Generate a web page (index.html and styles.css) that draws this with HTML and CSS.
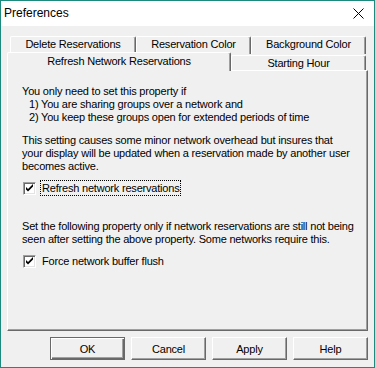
FILE: index.html
```html
<!DOCTYPE html>
<html lang="en">
<head>
  <meta charset="UTF-8" />
  <title>Preferences</title>
  <link rel="stylesheet" href="styles.css">
</head>
<body>
  <div class="window">
    <div class="titlebar">
      <span class="title">Preferences</span>
      <svg class="close" width="11" height="11" viewBox="0 0 11 11">
        <path d="M0.5 0.5 L10.5 10.5 M10.5 0.5 L0.5 10.5" stroke="#000" stroke-width="1" fill="none" />
      </svg>
    </div>
    <div class="dialog">
      <div class="tab-row back">
        <div class="tab w-delete">Delete Reservations</div>
        <div class="tab w-color">Reservation Color</div>
        <div class="tab w-color">Background Color</div>
      </div>
      <div class="tab-row front">
        <div class="tab active">Refresh Network Reservations</div>
        <div class="tab w-hour">Starting Hour</div>
      </div>
      <div class="panel">
        <div class="para">
          You only need to set this property if<br>
          <span class="indent">1) You are sharing groups over a network and</span><br>
          <span class="indent">2) You keep these groups open for extended periods of time</span>
        </div>
        <div class="para second">
          This setting causes some minor network overhead but insures that<br>
          your display will be updated when a reservation made by another user<br>
          becomes active.
        </div>
        <label class="check">
          <span class="box"><svg width="9" height="9" viewBox="0 0 9 9"><path d="M1 3 L1 5.5 L3 7.5 L8 2.5 L8 0 L3 5 Z" fill="#000" /></svg></span>
          <span class="label focused">Refresh network reservations</span>
        </label>
        <div class="para third">
          Set the following property only if network reservations are still not being<br>
          seen after setting the above property. Some networks require this.
        </div>
        <label class="check">
          <span class="box"><svg width="9" height="9" viewBox="0 0 9 9"><path d="M1 3 L1 5.5 L3 7.5 L8 2.5 L8 0 L3 5 Z" fill="#000" /></svg></span>
          <span class="label">Force network buffer flush</span>
        </label>
      </div>
      <div class="buttons">
        <button class="default">OK</button>
        <button>Cancel</button>
        <button>Apply</button>
        <button>Help</button>
      </div>
    </div>
  </div>
</body>
</html>
```

FILE: styles.css
```css
 * {
   box-sizing: border-box;
 }
 body {
   margin: 0;
   background: #f0f0f0;
   font-family: 'Liberation Sans', Arial, sans-serif;
   font-size: 11px;
   letter-spacing: -0.2px;
   color: #000;
 }
 .window {
   width: 375px;
   height: 368px;
   border: 1px solid #1c8a7c;
   display: flex;
   flex-direction: column;
   background: #f0f0f0;
 }
 .titlebar {
   height: 25px;
   background: #fff;
   display: flex;
   align-items: center;
   justify-content: space-between;
   padding: 0 10px 0 3px;
 }
 .title {
   font-size: 12px;
   letter-spacing: 0;
   margin-top: -1px;
 }
 .close {
   margin-top: -1px;
 }
 .dialog {
   flex: 1;
   display: flex;
   flex-direction: column;
   padding: 10px 6px 7px;
 }
 .tab-row {
   display: flex;
 }
 .tab-row.back {
   height: 16px;
   padding-left: 3px;
 }
 .tab-row.front {
   height: 18px;
   align-items: flex-start;
 }
 .tab {
   background: #f0f0f0;
   border-top: 1px solid #fff;
   border-left: 1px solid #fff;
   border-right: 1px solid #696969;
   box-shadow: inset -1px 0 0 #a0a0a0;
   border-radius: 2px 2px 0 0;
   text-align: center;
   line-height: 15px;
   height: 18px;
   white-space: nowrap;
 }
 .w-delete {
   width: 126px;
 }
 .w-color {
   width: 115px;
 }
 .front .tab {
   position: relative;
   z-index: 1;
 }
 .tab.active {
   width: 224px;
   height: 19px;
   line-height: 16px;
 }
 .w-hour {
   width: 135px;
   height: 15px;
   margin-top: 3px;
   line-height: 14px;
 }
 .panel {
   flex: 1;
   border-top: 1px solid #fff;
   border-left: 1px solid #fff;
   border-right: 1px solid #696969;
   border-bottom: 1px solid #696969;
   box-shadow: inset -1px -1px 0 #a0a0a0;
   padding: 14px 0 0 14px;
 }
 .para {
   line-height: 13px;
   white-space: nowrap;
 }
 .indent {
   padding-left: 7px;
 }
 .para.second {
   margin-top: 10px;
 }
 .para.third {
   margin-top: 24px;
 }
 .check {
   display: flex;
   align-items: center;
   height: 16px;
   margin-top: 7px;
 }
 .box {
   width: 13px;
   height: 13px;
   background: #fff;
   border-top: 1px solid #a0a0a0;
   border-left: 1px solid #a0a0a0;
   border-right: 1px solid #fff;
   border-bottom: 1px solid #fff;
   box-shadow: inset 1px 1px 0 #696969, inset -1px -1px 0 #e3e3e3;
   display: flex;
   align-items: center;
   justify-content: center;
   margin-left: 1px;
 }
 .box svg {
   display: block;
 }
 .label {
   margin-left: 4px;
   padding: 1px 1px;
   border: 1px dotted transparent;
   line-height: 12px;
 }
 .label.focused {
   border-color: #000;
 }
 .buttons {
   display: flex;
   justify-content: flex-end;
   gap: 6px;
   margin-top: 6px;
 }
 button {
   width: 75px;
   height: 23px;
   background: #f0f0f0;
   font-family: 'Liberation Sans', Arial, sans-serif;
   font-size: 11px;
   letter-spacing: -0.2px;
   color: #000;
   border-top: 1px solid #fff;
   border-left: 1px solid #fff;
   border-right: 1px solid #696969;
   border-bottom: 1px solid #696969;
   box-shadow: inset -1px -1px 0 #a0a0a0;
   padding: 0;
 }
 button.default {
   border: 1px solid #696969;
   box-shadow: inset 1px 1px 0 #fff, inset -1px -1px 0 #696969, inset -2px -2px 0 #a0a0a0;
 }
```
